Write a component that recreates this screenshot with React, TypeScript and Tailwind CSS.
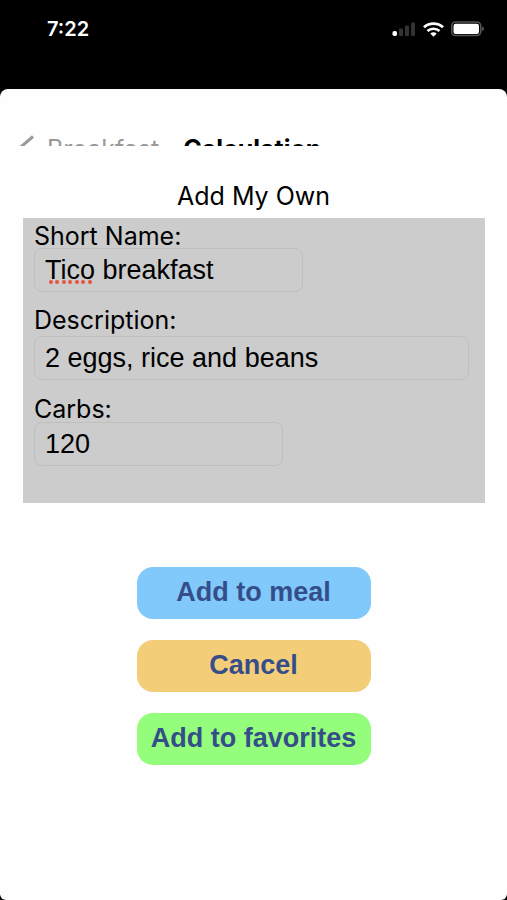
import { useState } from "react";

function StatusBar() {
  return (
    <div className="flex h-[89px] items-start justify-between bg-black pt-[17px] pr-[23px] pl-[47px] text-white">
      <span className="font-['Inter',sans-serif] text-[20px] leading-6 font-semibold">7:22</span>
      <div className="flex h-6 items-center gap-[7px]">
        <svg width="24" height="15" viewBox="0 0 24 15" aria-label="Signal strength" role="img">
          <rect x="0.5" y="9" width="4.5" height="5" rx="1.8" fill="#fff" />
          <rect x="7" y="6.5" width="4" height="7.5" rx="1" fill="#333" />
          <rect x="13" y="3.5" width="4" height="10.500" rx="1" fill="#333" />
          <rect x="19" y="0.5" width="4" height="13.500" rx="1" fill="#333" />
        </svg>
        <svg width="21" height="15" viewBox="0 0 21 15" fill="none" stroke="#fff" aria-label="Wi-Fi" role="img">
          <path d="M1 5.300C6.200 0.400 14.800 0.400 20 5.300" strokeWidth="2.800" />
          <path d="M4.500 9C7.900 5.900 13.100 5.900 16.500 9" strokeWidth="2.600" />
          <path d="M7.300 11.500Q10.500 9.100 13.700 11.500L10.500 14.700Z" fill="#fff" stroke="none" />
        </svg>
        <svg width="33" height="16" viewBox="0 0 33 16" aria-label="Battery" role="img">
          <rect x="0.750" y="1" width="29" height="13.500" rx="4" fill="none" stroke="#555" strokeWidth="1.600" />
          <rect x="2.500" y="2.700" width="25.500" height="10.200" rx="2.200" fill="#fff" />
          <path d="M31 5.500Q33 6 33 7.750T31 10Z" fill="#555" />
        </svg>
      </div>
    </div>
  );
}

function NavBar() {
  return (
    <nav className="h-[57px] overflow-hidden pt-[46px] pl-[17px] font-['Inter',sans-serif] text-[25px] leading-6">
      <div className="flex items-center">
        <button type="button" className="flex shrink-0 items-center text-[#999]">
          <svg width="17" height="28" viewBox="0 0 17 28" fill="none" stroke="#999" strokeWidth="3" aria-hidden="true">
            <path d="M16 1.500L1.500 14L16 26.500" />
          </svg>
          <span className="ml-[13px]">Breakfast</span>
        </button>
        <span className="ml-6 shrink-0 font-bold text-black">Calculation</span>
      </div>
    </nav>
  );
}

const labelClass = "block font-['Inter',sans-serif] text-[25px] leading-6";
const inputClass =
  "block h-11 rounded-lg border border-[#bfbfbf] bg-transparent px-[10px] font-['Liberation_Sans',Arial,sans-serif] text-[27px] text-black outline-none";

export default function App() {
  const [name, setName] = useState("Tico breakfast");
  const [description, setDescription] = useState("2 eggs, rice and beans");
  const [carbs, setCarbs] = useState("120");

  return (
    <div className="flex min-h-screen flex-col bg-black text-black">
      <StatusBar />
      <main className="flex flex-1 flex-col rounded-t-[8px] rounded-b-[6px] bg-[#fefefe]">
        <NavBar />
        <form onSubmit={(e) => e.preventDefault()}>
          <h1 className="mt-[34px] text-center font-['Inter',sans-serif] text-[25px] leading-8">Add My Own</h1>
          <div className="mt-[6px] mr-[22px] ml-[23px] bg-[#cccccc] px-[11px] pt-[6px] pb-[37px]">
            <label htmlFor="name" className={labelClass}>Short Name:</label>
            <div className="relative w-[269px] max-w-full">
              <input id="name" value={name} onChange={(e) => setName(e.target.value)} spellCheck={false} className={`${inputClass} w-full`} />
              {name.startsWith("Tico") && (
                <svg className="pointer-events-none absolute top-8 left-[14px]" width="46" height="4" viewBox="0 0 46 4" fill="#e8553f" aria-hidden="true">
                  {[3, 9, 16, 22, 29, 35, 42].map((x) => (
                    <circle key={x} cx={x} cy="2" r="2" />
                  ))}
                </svg>
              )}
            </div>
            <label htmlFor="description" className={`${labelClass} mt-4 mb-1`}>Description:</label>
            <input id="description" value={description} onChange={(e) => setDescription(e.target.value)} spellCheck={false} className={`${inputClass} w-[435px] max-w-full`} />
            <label htmlFor="carbs" className={`${labelClass} mt-[17px] mb-px`}>Carbs:</label>
            <input id="carbs" inputMode="numeric" value={carbs} onChange={(e) => setCarbs(e.target.value)} className={`${inputClass} w-[249px] max-w-full`} />
          </div>
          <div className="mx-auto mt-16 mb-10 flex w-[234px] flex-col gap-[21px] font-['Liberation_Sans',Arial,sans-serif] text-[27px] font-bold text-[#354e89]">
            <button type="submit" className="h-[52px] rounded-2xl bg-[#80c9fa] pb-[2px]">Add to meal</button>
            <button type="button" className="h-[52px] rounded-2xl bg-[#f4cd79] pb-[2px]">Cancel</button>
            <button type="button" className="h-[52px] rounded-2xl bg-[#94fd7b] pb-[2px]">Add to favorites</button>
          </div>
        </form>
      </main>
    </div>
  );
}
